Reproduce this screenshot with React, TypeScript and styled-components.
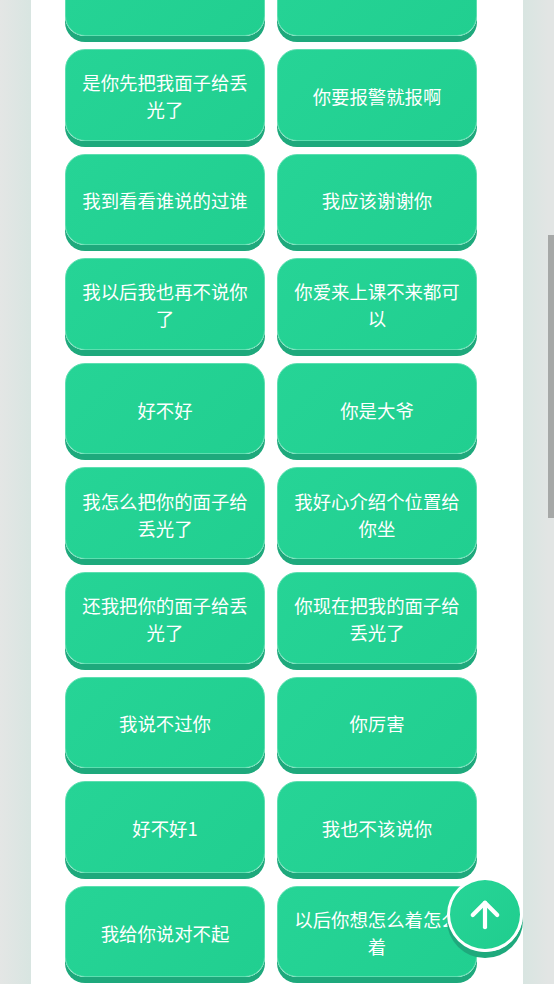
import React from 'react';
import styled, { createGlobalStyle } from 'styled-components';
import { ArrowUp } from 'lucide-react';

// the first row sits mostly above the fold, only its lower edge shows
const phrases: Array<string> = [
    '',
    '',
    '是你先把我面子给丢光了',
    '你要报警就报啊',
    '我到看看谁说的过谁',
    '我应该谢谢你',
    '我以后我也再不说你了',
    '你爱来上课不来都可以',
    '好不好',
    '你是大爷',
    '我怎么把你的面子给丢光了',
    '我好心介绍个位置给你坐',
    '还我把你的面子给丢光了',
    '你现在把我的面子给丢光了',
    '我说不过你',
    '你厉害',
    '好不好1',
    '我也不该说你',
    '我给你说对不起',
    '以后你想怎么着怎么着',
];

const App = () => {
    return (
        <Page>
            <GlobalStyle />
            <Panel>
                <Grid>
                    {phrases.map((text: string, index: number) => (
                        <PhraseButton key={index}>{text}</PhraseButton>
                    ))}
                </Grid>
            </Panel>
            <ScrollThumb />
            <TopButton aria-label="回到顶部">
                <ArrowUp size={42} strokeWidth={2.4} color="#ffffff" />
            </TopButton>
        </Page>
    );
};

const GlobalStyle = createGlobalStyle`
    html, body {
        margin: 0;
        padding: 0;
        overflow: hidden;
    }

    body {
        font-family: "Noto Sans CJK SC", "Noto Sans", sans-serif;
    }
`;

const Page = styled.div`
    width: 554px;
    height: 984px;
    overflow: hidden;
    background: linear-gradient(
        90deg,
        #e4e6e5 0%,
        #d8e5e1 5.6%,
        #d8e5e1 94.4%,
        #e2e5e4 99%
    );
`;

const Panel = styled.div`
    display: flow-root;
    width: 492px;
    height: 984px;
    margin: 0 auto;
    background-color: #ffffff;
`;

const Grid = styled.div`
    display: grid;
    grid-template-columns: 200px 200px;
    column-gap: 12px;
    row-gap: 13px;
    padding-left: 34px;
    margin-top: -55.6px;
`;

const PhraseButton = styled.button`
    box-sizing: border-box;
    height: 91.6px;
    padding: 3px 14px 0;
    border: 1px solid #5ddfb0;
    border-radius: 20px;
    background: linear-gradient(135deg, #26d496 0%, #21cf90 100%);
    box-shadow: 0 6px 0 #1ea97c;
    color: #ffffff;
    font-family: "Noto Sans CJK SC", "Noto Sans", sans-serif;
    font-size: 18.4px;
    line-height: 27px;
    text-align: center;
    cursor: pointer;
`;

const ScrollThumb = styled.div`
    position: fixed;
    top: 235px;
    right: 0;
    width: 6px;
    height: 283px;
    background-color: #a6a8a7;
`;

const TopButton = styled.button`
    position: fixed;
    right: 31px;
    bottom: 32px;
    box-sizing: border-box;
    width: 76px;
    height: 75px;
    padding: 0;
    border: 3px solid #ffffff;
    border-radius: 50%;
    background: linear-gradient(135deg, #27d597 0%, #20cd8e 100%);
    box-shadow: 0 6px 0 #1ea97c;
    display: flex;
    align-items: center;
    justify-content: center;
    cursor: pointer;
`;

export default App;
